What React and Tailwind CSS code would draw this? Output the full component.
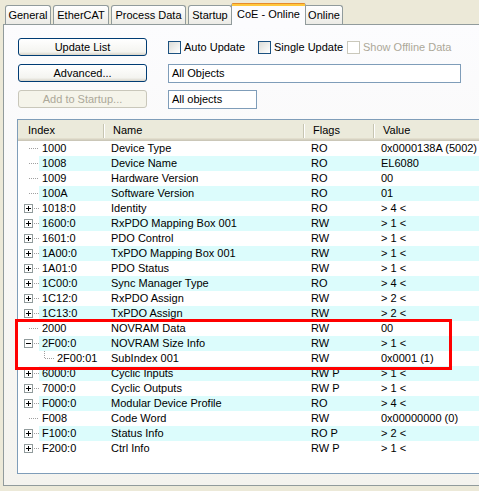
import React from "react";

const rows = [
  ["1000", "Device Type", "RO", "0x0000138A (5002)", "leaf"],
  ["1008", "Device Name", "RO", "EL6080", "leaf"],
  ["1009", "Hardware Version", "RO", "00", "leaf"],
  ["100A", "Software Version", "RO", "01", "leaf"],
  ["1018:0", "Identity", "RO", "> 4 <", "plus"],
  ["1600:0", "RxPDO Mapping Box 001", "RW", "> 1 <", "plus"],
  ["1601:0", "PDO Control", "RW", "> 1 <", "plus"],
  ["1A00:0", "TxPDO Mapping Box 001", "RW", "> 1 <", "plus"],
  ["1A01:0", "PDO Status", "RW", "> 1 <", "plus"],
  ["1C00:0", "Sync Manager Type", "RO", "> 4 <", "plus"],
  ["1C12:0", "RxPDO Assign", "RW", "> 2 <", "plus"],
  ["1C13:0", "TxPDO Assign", "RW", "> 2 <", "plus"],
  ["2000", "NOVRAM Data", "RW", "00", "leaf"],
  ["2F00:0", "NOVRAM Size Info", "RW", "> 1 <", "minus"],
  ["2F00:01", "SubIndex 001", "RW", "0x0001 (1)", "child"],
  ["6000:0", "Cyclic Inputs", "RW P", "> 1 <", "plus"],
  ["7000:0", "Cyclic Outputs", "RW P", "> 1 <", "plus"],
  ["F000:0", "Modular Device Profile", "RO", "> 4 <", "plus"],
  ["F008", "Code Word", "RW", "0x00000000 (0)", "leaf"],
  ["F100:0", "Status Info", "RO P", "> 2 <", "plus"],
  ["F200:0", "Ctrl Info", "RW P", "> 1 <", "plus"],
];

const tabs = [
  ["General", "w-[46px] ml-[5px]"],
  ["EtherCAT", "w-[56px] ml-[2px]"],
  ["Process Data", "w-[75px] ml-[2px]"],
  ["Startup", "w-[44px] ml-[2px]"],
];

const Tree = ({ kind }) => {
  if (kind === "child") {
    return (
      <svg width="36" height="15" className="shrink-0" shapeRendering="crispEdges">
        <line x1="26.5" y1="0" x2="26.5" y2="8" stroke="#a0a0a0" strokeDasharray="1 1" />
        <line x1="27" y1="7.5" x2="37" y2="7.5" stroke="#a0a0a0" strokeDasharray="1 1" />
      </svg>
    );
  }
  return (
    <svg width="21" height="15" className="shrink-0" shapeRendering="crispEdges">
      {kind === "leaf" ? (
        <line x1="11" y1="7.5" x2="21" y2="7.5" stroke="#a0a0a0" strokeDasharray="1 1" />
      ) : (
        <>
          <rect x="6.5" y="3.5" width="8" height="8" fill="#fff" stroke="#919b9c" />
          <line x1="8" y1="7.5" x2="13" y2="7.5" stroke="#000" />
          {kind === "plus" && <line x1="10.5" y1="5" x2="10.5" y2="10" stroke="#000" />}
          <line x1="16" y1="7.5" x2="21" y2="7.5" stroke="#a0a0a0" strokeDasharray="1 1" />
        </>
      )}
    </svg>
  );
};

const Button = ({ children, disabled }) => (
  <div
    className={
      "w-[129px] h-[18px] ml-px flex items-center justify-center rounded-[3px] border " +
      (disabled
        ? "border-[#c9c7ba] bg-[#f5f4ea] text-[#aca899]"
        : "border-[#003c74] bg-[linear-gradient(to_bottom,#ffffff,#f4f4f0_80%,#d8d4c8)] text-black")
    }
  >
    {children}
  </div>
);

const Check = ({ label, disabled, w }) => (
  <div className={"flex items-center " + w}>
    <div
      className={
        "w-[13px] h-[13px] border " +
        (disabled ? "border-[#cac8bb] bg-white" : "border-[#1c5180] bg-[linear-gradient(135deg,#dcdcd7,#ffffff)]")
      }
    />
    <span className={"ml-[3px] " + (disabled ? "text-[#aca899]" : "text-black")}>{label}</span>
  </div>
);

const Divider = () => <div className="w-[2px] h-[14px] border-l border-[#c7c5b2] border-r border-r-white" />;

export default function App() {
  return (
    <div
      className="relative w-[479px] h-[491px] overflow-hidden bg-[#ece9d8] text-[11px] text-black"
      style={{ fontFamily: '"Liberation Sans", Arial, sans-serif' }}
    >
      <div className="h-[24px] flex items-end">
        {tabs.map(([t, c]) => (
          <div
            key={t}
            className={
              c +
              " h-[19px] pt-px flex items-center justify-center border border-b-0 border-[#919b9c] rounded-t-[3px] bg-[linear-gradient(to_bottom,#ffffff,#ecebe6)]"
            }
          >
            {t}
          </div>
        ))}
        <div className="relative z-10 w-[75px] -ml-px h-[22px] -mb-px flex flex-col border-x border-[#919b9c] rounded-t-[3px] bg-[#fcfcfe]">
          <div className="h-[1px] bg-[#e68b2c] rounded-t-[3px]" />
          <div className="h-[2px] bg-[#ffc73c]" />
          <div className="flex-1 flex items-center justify-center pb-[2px]">CoE - Online</div>
        </div>
        <div className="w-[37px] h-[19px] pt-px flex items-center justify-center border border-b-0 border-l-0 border-[#919b9c] rounded-tr-[3px] bg-[linear-gradient(to_bottom,#ffffff,#ecebe6)]">
          Online
        </div>
      </div>

      <div className="ml-[3px] w-[480px] h-[462px] border-t border-l border-b border-[#919b9c] bg-[linear-gradient(to_bottom,#fcfcfe,#f4f3ee)] pl-[13px] pt-[12px] flex flex-col">
        <div className="h-[20px] flex items-center">
          <Button>Update List</Button>
          <div className="ml-[21px] flex items-center">
            <Check label="Auto Update" w="w-[90px]" />
            <Check label="Single Update" w="w-[89px]" />
            <Check label="Show Offline Data" disabled w="w-[120px]" />
          </div>
        </div>
        <div className="mt-[6px] h-[20px] flex items-center">
          <Button>Advanced...</Button>
          <div className="ml-[21px] w-[293px] h-[19px] border border-[#7f9db9] bg-white flex items-center pl-[3px]">
            All Objects
          </div>
        </div>
        <div className="mt-[6px] h-[20px] flex items-center">
          <Button disabled>Add to Startup...</Button>
          <div className="ml-[21px] w-[89px] h-[19px] border border-[#7f9db9] bg-white flex items-center pl-[3px]">
            All objects
          </div>
        </div>

        <div className="mt-[10px] h-[355px] border border-[#7f9db9] bg-white flex flex-col">
          <div className="h-[21px] flex flex-col shrink-0">
            <div className="h-[18px] bg-[#ebeadb] flex items-center pt-[3px]">
              <div className="w-[85px] pl-[10px]">Index</div>
              <Divider />
              <div className="w-[198px] pl-[8px]">Name</div>
              <Divider />
              <div className="w-[68px] pl-[8px]">Flags</div>
              <Divider />
              <div className="pl-[8px]">Value</div>
            </div>
            <div className="h-px bg-[#e2decd]" />
            <div className="h-px bg-[#d6d2c2]" />
            <div className="h-px bg-[#cbc7b8]" />
          </div>
          {rows.map(([idx, name, flags, value, kind], i) => {
            const bg = i % 2 === 1 ? "bg-[#dcfcfc]" : "bg-white";
            return (
              <div key={idx} className="h-[15px] flex leading-[15px] shrink-0">
                <div className="w-[85px] flex">
                  <Tree kind={kind} />
                  <div className={"flex-1 pl-[3px] " + bg}>{idx}</div>
                </div>
                <div className={"w-[200px] pl-[8px] " + bg}>{name}</div>
                <div className={"w-[70px] pl-[8px] " + bg}>{flags}</div>
                <div className={"flex-1 pl-[8px] " + bg}>{value}</div>
              </div>
            );
          })}
        </div>
      </div>

      <div className="absolute left-[15px] top-[319px] w-[437px] h-[51px] border-[3px] border-[#ff0000]" />
    </div>
  );
}
